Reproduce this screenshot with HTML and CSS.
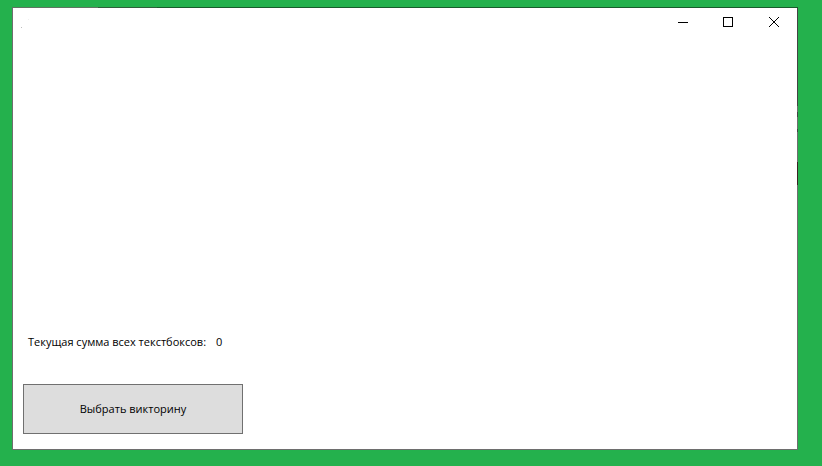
FILE: index.html
```html
<!DOCTYPE html>
<html lang="ru">
<head>
<meta charset="utf-8">
<title>Викторина</title>
<link rel="stylesheet" href="styles.css">
</head>
<body>
<main class="window">
  <header class="titlebar">
    <svg class="app-icon" width="16" height="16" viewBox="0 0 16 16" aria-hidden="true">
      <rect x="1" y="11" width="1" height="1" fill="#bdbdbd"/>
      <rect x="8" y="3" width="1" height="1" fill="#f0f0f0"/>
    </svg>
    <div class="captions">
      <button class="caption" type="button" aria-label="Свернуть">
        <svg width="46" height="30" viewBox="0 0 46 30" shape-rendering="crispEdges"><path d="M19 14.5H29" stroke="#000" fill="none"/></svg>
      </button>
      <button class="caption" type="button" aria-label="Развернуть">
        <svg width="46" height="30" viewBox="0 0 46 30" shape-rendering="crispEdges"><rect x="18.5" y="9.5" width="9" height="9" stroke="#000" fill="none"/></svg>
      </button>
      <button class="caption" type="button" aria-label="Закрыть">
        <svg width="46" height="30" viewBox="0 0 46 30"><path d="M18 9L28 19M28 9L18 19" stroke="#000" fill="none"/></svg>
      </button>
    </div>
  </header>
  <section class="content">
    <p class="total"><span>Текущая сумма всех текстбоксов:</span><output>0</output></p>
    <button class="choose" type="button">Выбрать викторину</button>
  </section>
</main>
</body>
</html>
```
FILE: styles.css
```css
* {
  box-sizing: border-box;
}

body {
  margin: 0;
  min-height: 100vh;
  padding: 7px 24px 16px 12px;
  display: flex;
  background: #24b14d;
  color: #000;
  font: 11px/16px "Segoe UI", "Open Sans", "Noto Sans", sans-serif;
}

.window {
  flex: 1;
  display: flex;
  flex-direction: column;
  border: 1px solid transparent;
  background:
    linear-gradient(#fff, #fff) padding-box,
    linear-gradient(90deg, #5f7561 86px, #2f5f3b 86px 145px, #185c2c 145px) top / 100% 1px no-repeat border-box,
    linear-gradient(#444 99px, #6e6e6e 99px 105px, #444 105px 110px, #6e6e6e 110px 122px, #444 122px 125px, #6e6e6e 125px 155px, #3a2424 155px 178px, #6e6e6e 178px) right / 1px 100% no-repeat border-box,
    linear-gradient(#6e6e6e, #6e6e6e) border-box;
}

.titlebar {
  display: flex;
  justify-content: space-between;
  padding-left: 7px;
}

.app-icon {
  margin-top: 8px;
}

.captions {
  display: flex;
}

.caption {
  padding: 0;
  border: 0;
  background: none;
}

.caption svg {
  display: block;
}

.content {
  flex: 1;
  display: flex;
  flex-direction: column;
  justify-content: flex-end;
  align-items: flex-start;
  gap: 34px;
  padding: 0 10px 15px;
}

.total {
  display: flex;
  gap: 10px;
  margin: 0;
  padding-left: 5px;
}

.choose {
  width: 220px;
  height: 50px;
  border: 1px solid #707070;
  border-radius: 0;
  background: #ddd;
  color: inherit;
  font: inherit;
}
```
